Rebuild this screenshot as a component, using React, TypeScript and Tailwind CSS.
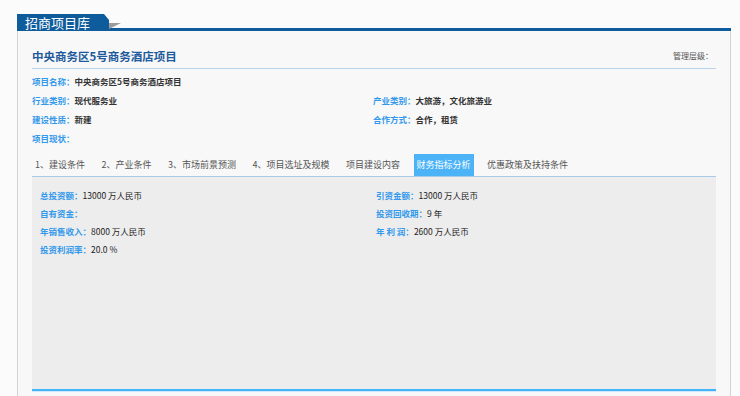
import React from "react";

const FONT = '"Noto Sans CJK SC", "Noto Sans", "Liberation Sans", sans-serif';

function TopRow({ label, value }: { label: string; value?: string }) {
  return (
    <div className="flex font-bold">
      <span className="text-[#3399ec]">{label}：</span>
      <span className="text-[#333]">{value}</span>
    </div>
  );
}

function DataRow({ label, value }: { label: string; value?: string }) {
  return (
    <div className="flex">
      <span className="text-[#3399ec] font-bold">{label}：</span>
      <span className="text-[#222]">{value}</span>
    </div>
  );
}

const tabs = [
  "1、建设条件",
  "2、产业条件",
  "3、市场前景预测",
  "4、项目选址及规模",
  "项目建设内容",
  "财务指标分析",
  "优惠政策及扶持条件",
];

export default function App() {
  return (
    <div
      className="w-[740px] h-[396px] overflow-hidden bg-[#fbfbfb] pt-[14px] pl-[17px] pr-[9px]"
      style={{ fontFamily: FONT }}
    >
      {/* header */}
      <div className="relative flex h-[17px]">
        <div className="w-[92px] h-[17px] bg-[#0f5c9c] text-white text-[13px] leading-[17px] pl-[8px] [clip-path:polygon(0_0,87px_0,100%_6px,100%_100%,0_100%)]">
          招商项目库
        </div>
        <div className="flex-1 self-end h-[3px] bg-[#0f5c9c]" />
        <svg
          className="absolute left-[92px] top-[9px]"
          width="12"
          height="6"
          viewBox="0 0 12 6"
        >
          <polygon points="0,6 12,0 0,0" fill="#9c9c9c" />
        </svg>
      </div>

      {/* panel */}
      <div className="h-[365px] border-x border-[#d3d3d3] bg-[#f8f8f8] pl-[14px] pr-[14px]">
        <div className="flex justify-between items-center pt-[16px] leading-[18px]">
          <span className="text-[11.5px] font-bold text-[#1d5a9c]">
            中央商务区5号商务酒店项目
          </span>
          <span className="text-[8px] text-[#555] pr-[3px]">管理层级：</span>
        </div>
        <div className="mt-[3px] h-px bg-[#b9d3ea]" />

        <div className="mt-[3px] text-[8.5px] leading-[19px] grid grid-cols-[341px_1fr]">
          <div className="col-span-2">
            <TopRow label="项目名称" value="中央商务区5号商务酒店项目" />
          </div>
          <TopRow label="行业类别" value="现代服务业" />
          <TopRow label="产业类别" value="大旅游，文化旅游业" />
          <TopRow label="建设性质" value="新建" />
          <TopRow label="合作方式" value="合作，租赁" />
          <div className="col-span-2">
            <TopRow label="项目现状" />
          </div>
        </div>

        {/* tabs */}
        <div className="mt-[6px] h-[23px] border-b border-[#a9cbe8] flex gap-[10.5px] text-[9px]">
          {tabs.map((t) => {
            const active = t === "财务指标分析";
            return (
              <div
                key={t}
                className={
                  active
                    ? "h-[22px] px-[3px] leading-[22px] bg-[#4cb3f6] text-white"
                    : "h-[22px] px-[3px] leading-[22px] text-[#555]"
                }
              >
                {t}
              </div>
            );
          })}
        </div>

        {/* content */}
        <div className="h-[212px] bg-[#ededed] pt-[9px] pl-[8px] text-[8.5px] leading-[18px] grid grid-cols-[336px_1fr] content-start">
          <DataRow label="总投资额" value="13000 万人民币" />
          <DataRow label="引资金额" value="13000 万人民币" />
          <DataRow label="自有资金" />
          <DataRow label="投资回收期" value="9 年" />
          <DataRow label="年销售收入" value="8000 万人民币" />
          <DataRow label="年 利 润" value="2600 万人民币" />
          <DataRow label="投资利润率" value="20.0 %" />
        </div>
        <div className="h-[2px] bg-[#45b4f6]" />
        <div className="h-px bg-[#cfe9fb]" />
      </div>
    </div>
  );
}
